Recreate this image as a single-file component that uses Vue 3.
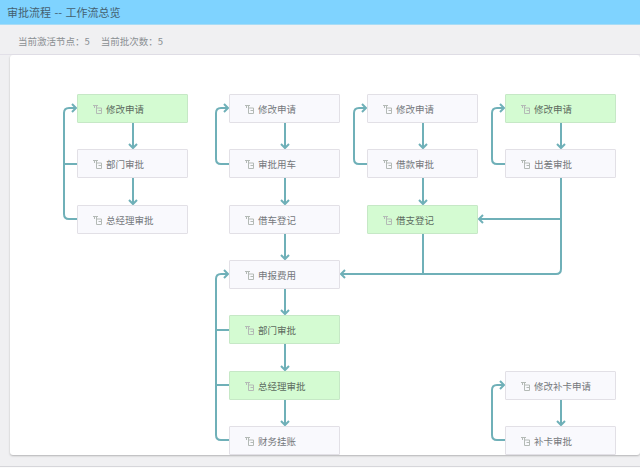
<script setup>
const nodes = [
  { t: '修改申请', x: 77, y: 94, on: true },
  { t: '部门审批', x: 77, y: 149 },
  { t: '总经理审批', x: 77, y: 205 },
  { t: '修改申请', x: 229, y: 94 },
  { t: '审批用车', x: 229, y: 149 },
  { t: '借车登记', x: 229, y: 205 },
  { t: '申报费用', x: 229, y: 260 },
  { t: '部门审批', x: 229, y: 315, on: true },
  { t: '总经理审批', x: 229, y: 371, on: true },
  { t: '财务挂账', x: 229, y: 426 },
  { t: '修改申请', x: 367, y: 94 },
  { t: '借款审批', x: 367, y: 149 },
  { t: '借支登记', x: 367, y: 205, on: true },
  { t: '修改申请', x: 505, y: 94, on: true },
  { t: '出差审批', x: 505, y: 149 },
  { t: '修改补卡申请', x: 505, y: 371 },
  { t: '补卡审批', x: 505, y: 426 },
]

const lines = [
  'M133 123V147', 'M133 178V203',
  'M77 219H69Q64 219 64 214V113Q64 108 69 108H75', 'M64 164H77',
  'M285 123V147', 'M285 178V203', 'M285 234V258', 'M285 289V313', 'M285 344V369', 'M285 400V424',
  'M229 164H221Q216 164 216 159V113Q216 108 221 108H227',
  'M229 440H221Q216 440 216 435V279Q216 274 221 274H227', 'M216 330H229', 'M216 385H229',
  'M423 123V147', 'M423 178V203',
  'M367 164H359Q354 164 354 159V113Q354 108 359 108H365',
  'M561 123V147',
  'M505 164H497Q492 164 492 159V113Q492 108 497 108H503',
  'M561 178V269Q561 274 556 274H342', 'M561 219H480', 'M423 234V274',
  'M561 400V424',
  'M505 440H497Q492 440 492 435V390Q492 385 497 385H503',
]

const downs = [
  [133, 149], [133, 205], [285, 149], [285, 205], [285, 260], [285, 315], [285, 371], [285, 426],
  [423, 149], [423, 205], [561, 149], [561, 426],
]
const rights = [[77, 108], [229, 108], [229, 274], [367, 108], [505, 108], [505, 385]]
const lefts = [[340, 274], [478, 219]]
</script>

<template>
  <div class="page">
    <header class="top">审批流程 -- 工作流总览</header>
    <div class="stats">
      <span>当前激活节点：5</span>
      <span>当前批次数：5</span>
    </div>
    <main class="card"></main>
    <div class="foot"></div>
    <div class="canvas">
      <svg class="wires" width="640" height="468" viewBox="0 0 640 468">
        <g fill="none" stroke="#6fb0b8" stroke-width="2">
          <path v-for="(d, i) in lines" :key="i" :d="d" />
          <path v-for="(p, i) in downs" :key="'d' + i" :d="`M${p[0] - 4} ${p[1] - 5}L${p[0]} ${p[1] - 1}L${p[0] + 4} ${p[1] - 5}`" />
          <path v-for="(p, i) in rights" :key="'r' + i" :d="`M${p[0] - 5} ${p[1] - 4}L${p[0] - 1} ${p[1]}L${p[0] - 5} ${p[1] + 4}`" />
          <path v-for="(p, i) in lefts" :key="'l' + i" :d="`M${p[0] + 5} ${p[1] - 4}L${p[0] + 1} ${p[1]}L${p[0] + 5} ${p[1] + 4}`" />
        </g>
      </svg>
      <div
        v-for="(n, i) in nodes"
        :key="i"
        class="node"
        :class="{ on: n.on }"
        :style="{ left: n.x + 'px', top: n.y + 'px' }"
      >
        <svg class="ico" width="9" height="10" viewBox="0 0 9 10" fill="none" stroke="#b4bab6" stroke-width="1">
          <path d="M0 1.5H5M1.5 1.5V4M3.5 1.5V4M3.5 4H8.5V9.5H3.5ZM5.5 6.5H8.5" />
        </svg>
        <span>{{ n.t }}</span>
      </div>
    </div>
  </div>
</template>

<style>
html, body { margin: 0; background: #f1f1f2; }
</style>

<style scoped>
.page {
  position: relative;
  width: 640px;
  height: 468px;
  overflow: hidden;
  background: #f0f0f2;
  font-family: "Noto Sans CJK SC", "Liberation Sans", sans-serif;
  display: flex;
  flex-direction: column;
}
.top {
  height: 25px;
  flex: none;
  box-sizing: border-box;
  border-bottom: 1px solid #a8dcf6;
  background: #7fd3ff;
  color: #44606f;
  font-size: 11px;
  line-height: 25px;
  padding-left: 7px;
  word-spacing: 1px;
}
.stats {
  height: 30px;
  flex: none;
  box-sizing: border-box;
  border-bottom: 1px solid #e2e0e8;
  display: flex;
  gap: 11px;
  padding-left: 18px;
  font-size: 9.5px;
  line-height: 33px;
  color: #8b8f92;
}
.card {
  flex: none;
  height: 400px;
  margin-left: 10px;
  background: #fff;
  border-radius: 3px;
  box-shadow: 0 1px 2px rgba(0, 0, 0, 0.25);
}
.foot {
  flex: none;
  height: 2px;
  margin-top: 11px;
  border-top: 1px solid #d6d6da;
  background: #fbfbfb;
}
.canvas {
  position: absolute;
  inset: 0;
}
.wires {
  position: absolute;
  left: 0;
  top: 0;
}
.node {
  position: absolute;
  box-sizing: border-box;
  width: 111px;
  height: 29px;
  display: flex;
  align-items: center;
  padding-left: 15px;
  gap: 4px;
  background: #f9f9fd;
  border: 1px solid #e2e0e6;
  border-radius: 1px;
  color: #75787c;
  font-size: 9.5px;
}
.node.on {
  background: #d4fbd2;
  border-color: #c6e8c6;
  color: #5d6b5f;
}
.ico {
  flex: none;
}
</style>
